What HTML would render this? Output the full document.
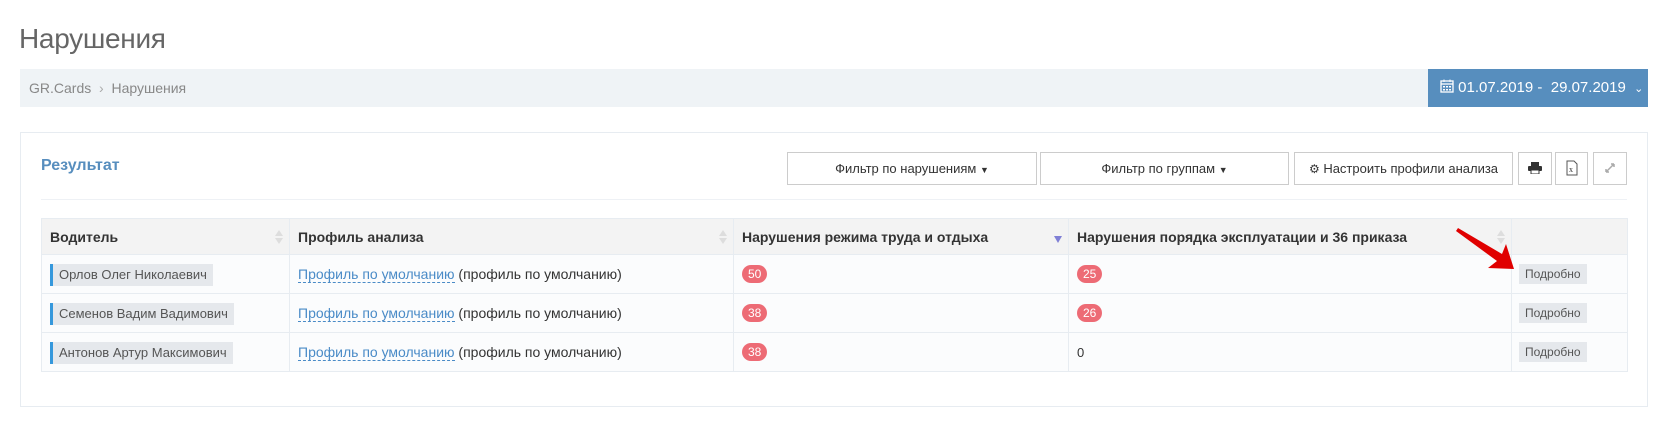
<!DOCTYPE html>
<html><head><meta charset="utf-8"><style>
*{box-sizing:border-box;margin:0;padding:0}
body{width:1668px;height:427px;background:#fff;font-family:"Liberation Sans",sans-serif;position:relative;overflow:hidden;color:#333}
.abs{position:absolute}
.title{left:19px;top:23px;font-size:28px;color:#666;font-weight:300;letter-spacing:-0.3px}
.bc{left:20px;top:69px;width:1408px;height:38px;background:#eff3f6;font-size:14px;color:#888;padding:11px 0 0 9px}
.date{left:1428px;top:69px;width:220px;height:38px;background:#578ebe;color:#fff;font-size:15px;padding:10px 0 0 12px;white-space:nowrap}
.panel{left:20px;top:132px;width:1628px;height:275px;border:1px solid #e7ecf1}
.res{left:41px;top:157px;font-size:16px;font-weight:bold;color:#578ebe}
.btn{position:absolute;top:152px;height:33px;border:1px solid #ccc;background:#fff;font-size:13px;color:#333;text-align:center;line-height:31px;white-space:nowrap}
.hr{left:41px;top:199px;width:1586px;height:1px;background:#eef1f5}
table{position:absolute;left:41px;top:218px;width:1587px;border-collapse:collapse;font-size:14px}
td,th{border:1px solid #e7ecf1;text-align:left;vertical-align:middle}
th{height:36px;background:#f3f3f3;font-weight:600;padding:0 8px;position:relative;color:#333}
td{height:39px;background:#fbfcfd;padding:0 8px}
.nm{display:inline-block;background:#e5e8ec;border-left:3px solid #3598dc;font-size:13px;color:#555;padding:3px 6px 4px 6px;margin-top:2px}
.lk{color:#4a8bc7;border-bottom:1px dashed #4a8bc7}
.bd{display:inline-block;background:#ed6b75;color:#fff;font-size:12px;border-radius:9px;padding:2px 6px;height:18px;line-height:14px}
.pd{display:inline-block;background:#e5e8ec;color:#555;font-size:12px;padding:3px 6px;margin-left:-1px}
.sort{position:absolute;right:6px;top:10px;width:8px;height:16px}
</style></head><body>
<div class="abs title">Нарушения</div>
<div class="abs bc">GR.Cards &nbsp;<span style="color:#aaa">›</span>&nbsp; Нарушения</div>
<div class="abs date"><svg width="14" height="14" viewBox="0 0 14 14" style="vertical-align:-1px"><rect x="1" y="2" width="12" height="11" fill="none" stroke="#fff" stroke-width="1.3"/><line x1="1" y1="5" x2="13" y2="5" stroke="#fff" stroke-width="1.3"/><line x1="4" y1="0.5" x2="4" y2="3" stroke="#fff"/><line x1="10" y1="0.5" x2="10" y2="3" stroke="#fff"/><g fill="#fff"><rect x="3" y="7" width="2" height="1.5"/><rect x="6" y="7" width="2" height="1.5"/><rect x="9" y="7" width="2" height="1.5"/><rect x="3" y="10" width="2" height="1.5"/><rect x="6" y="10" width="2" height="1.5"/><rect x="9" y="10" width="2" height="1.5"/></g></svg> 01.07.2019 -&nbsp; 29.07.2019 &nbsp;<span style="font-size:11px">⌄</span></div>
<div class="abs panel"></div>
<div class="abs res">Результат</div>
<div class="btn" style="left:787px;width:250px">Фильтр по нарушениям <span style="font-size:9px">▼</span></div>
<div class="btn" style="left:1040px;width:249px">Фильтр по группам <span style="font-size:9px">▼</span></div>
<div class="btn" style="left:1294px;width:219px"><span style="font-size:12px">⚙</span> Настроить профили анализа</div>
<div class="btn" style="left:1518px;width:34px"><svg width="14" height="12" viewBox="0 0 14 12" style="vertical-align:-1px"><rect x="3" y="0" width="8" height="4" fill="#333"/><rect x="0" y="4" width="14" height="5" rx="1" fill="#333"/><rect x="3" y="8" width="8" height="4" fill="#fff" stroke="#333"/></svg></div>
<div class="btn" style="left:1555px;width:33px"><svg width="12" height="16" viewBox="0 0 12 16" style="vertical-align:-3px"><path d="M1 1h7l3 3v11H1z" fill="none" stroke="#555"/><text x="3" y="12" font-size="8" fill="#333" font-family="Liberation Serif">x</text></svg></div>
<div class="btn" style="left:1593px;width:34px;color:#aaa"><svg width="12" height="12" viewBox="0 0 12 12" style="vertical-align:-1px"><path d="M2 10L10 2M10 2H7M10 2V5M2 10H5M2 10V7" stroke="#aaa" stroke-width="1.5" fill="none"/></svg></div>
<div class="abs hr"></div>
<table>
<tr><th style="width:248px">Водитель<svg class="sort" viewBox="0 0 8 16"><path d="M4 1L8 7H0z M4 15L8 9H0z" fill="#ddd"/></svg></th>
<th style="width:444px">Профиль анализа<svg class="sort" viewBox="0 0 8 16"><path d="M4 1L8 7H0z M4 15L8 9H0z" fill="#ddd"/></svg></th>
<th style="width:335px">Нарушения режима труда и отдыха<svg class="sort" viewBox="0 0 8 16"><path d="M4 14L8 7H0z" fill="#7f7fd5"/></svg></th>
<th style="width:443px">Нарушения порядка эксплуатации и 36 приказа<svg class="sort" viewBox="0 0 8 16"><path d="M4 1L8 7H0z M4 15L8 9H0z" fill="#ddd"/></svg></th>
<th></th></tr>
<tr><td><span class="nm">Орлов Олег Николаевич</span></td><td><span class="lk">Профиль по умолчанию</span> (профиль по умолчанию)</td><td><span class="bd">50</span></td><td><span class="bd">25</span></td><td><span class="pd">Подробно</span></td></tr>
<tr><td><span class="nm">Семенов Вадим Вадимович</span></td><td><span class="lk">Профиль по умолчанию</span> (профиль по умолчанию)</td><td><span class="bd">38</span></td><td><span class="bd">26</span></td><td><span class="pd">Подробно</span></td></tr>
<tr><td><span class="nm">Антонов Артур Максимович</span></td><td><span class="lk">Профиль по умолчанию</span> (профиль по умолчанию)</td><td><span class="bd">38</span></td><td style="font-size:13px">0</td><td><span class="pd">Подробно</span></td></tr>
</table>
<svg class="abs" style="left:1452px;top:224px" width="70" height="50" viewBox="0 0 70 50"><path d="M6 4L50 30L54 20L62 45L36 44L45 37L4 7z" fill="#e00000"/></svg>
</body></html>
